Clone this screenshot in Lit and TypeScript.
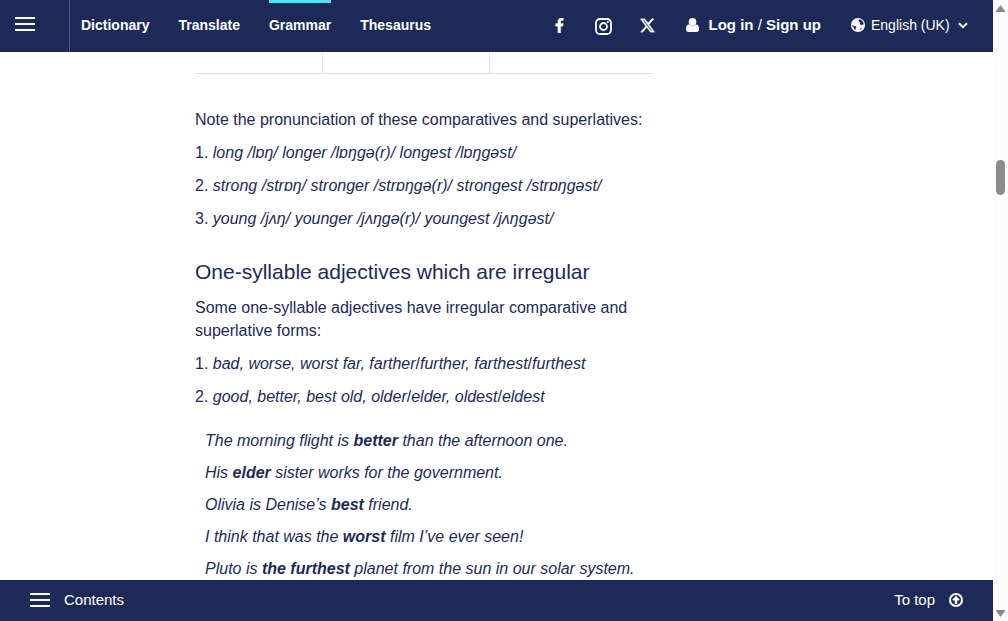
import { LitElement, html, css, svg } from "lit";
import { customElement } from "lit/decorators.js";

const menuIcon = html`<svg class="icon" width="20" height="14" viewBox="0 0 20 14" aria-hidden="true">
  <path fill="currentColor" d="M0 0h20v2H0zM0 6h20v2H0zM0 12h20v2H0z" />
</svg>`;

const social = [
  {
    label: "Facebook",
    width: 9,
    height: 15,
    box: "95 0 864 1664",
    shape: svg`<path fill="currentColor" stroke="currentColor" stroke-width="40" d="M959 12v264h-157q-86 0-116 36t-30 108v189h293l-39 296h-254v759h-306v-759h-255v-296h255v-218q0-186 104-288.5t277-102.5q147 0 228 12z"/>`,
  },
  {
    label: "Instagram",
    width: 17,
    height: 17,
    box: "0 0 17 17",
    shape: svg`<rect x="1" y="1" width="15" height="15" rx="4" fill="none" stroke="currentColor" stroke-width="1.8"/>
      <circle cx="8.5" cy="8.5" r="3.5" fill="none" stroke="currentColor" stroke-width="1.8"/>
      <circle cx="12.9" cy="4.1" r="1" fill="currentColor"/>`,
  },
  {
    label: "X",
    width: 15,
    height: 15,
    box: "1 1.5 22 21",
    shape: svg`<path fill="currentColor" stroke="currentColor" stroke-width="0.5" d="M18.244 2.25h3.308l-7.227 8.26 8.502 11.24H16.17l-5.214-6.817L4.99 21.75H1.68l7.73-8.835L1.254 2.25H8.08l4.713 6.231zm-1.161 17.52h1.833L7.084 4.126H5.117z"/>`,
  },
];

@customElement("site-header")
export class SiteHeader extends LitElement {
  static styles = css`
    :host {
      display: flex;
      align-items: stretch;
      box-sizing: border-box;
      height: 52px;
      background: #1d2a57;
      color: #fff;
      font-size: 14px;
      line-height: 20px;
    }
    .icon {
      display: block;
      flex: none;
    }
    .menu {
      width: 70px;
      padding: 0 0 4px 15px;
      border: 0;
      border-right: 1px solid #4a5579;
      background: none;
      color: inherit;
      cursor: pointer;
    }
    .nav {
      display: flex;
      gap: 29px;
      padding-left: 11px;
    }
    .nav-link {
      box-sizing: border-box;
      padding-top: 12px;
      border-top: 3px solid transparent;
      color: inherit;
      font-weight: bold;
      text-decoration: none;
    }
    .current {
      border-top-color: #4fe0fc;
    }
    .tools {
      display: flex;
      align-items: center;
      margin-left: auto;
      padding-right: 25px;
    }
    .social {
      display: flex;
      margin-right: 17px;
    }
    .social-link {
      display: flex;
      justify-content: center;
      width: 44px;
      color: inherit;
    }
    .account {
      display: flex;
      align-items: center;
      gap: 9px;
      margin-right: 30px;
      padding-bottom: 2px;
      font-size: 15px;
    }
    .account-link {
      color: inherit;
      font-weight: bold;
      text-decoration: none;
    }
    .language {
      display: grid;
      grid-template-columns: 14px auto 10px;
      align-items: center;
      padding-bottom: 2px;
    }
    .select {
      grid-area: 1 / 2 / 2 / 4;
      appearance: none;
      margin: 0;
      padding: 0 18px 0 6px;
      border: 0;
      background: none;
      color: inherit;
      font: inherit;
      cursor: pointer;
    }
    .chevron {
      grid-area: 1 / 3;
      pointer-events: none;
    }
  `;

  render() {
    return html`
      <button class="menu" aria-label="Menu">${menuIcon}</button>
      <nav class="nav">
        ${["Dictionary", "Translate", "Grammar", "Thesaurus"].map(
          (name) => html`<a class="nav-link ${name === "Grammar" ? "current" : ""}" href="#">${name}</a>`
        )}
      </nav>
      <div class="tools">
        <div class="social">
          ${social.map(
            (s) => html`<a class="social-link" href="#" aria-label=${s.label}>
              <svg class="icon" width=${s.width} height=${s.height} viewBox=${s.box}>${s.shape}</svg>
            </a>`
          )}
        </div>
        <div class="account">
          <svg class="icon" width="13" height="14" viewBox="0 0 13 14" aria-hidden="true">
            <ellipse cx="6.5" cy="4" rx="3.8" ry="4" fill="currentColor" />
            <path fill="currentColor" d="M3 6.600C.800 6.600 0 8.500 0 11.200 0 13 1 14 2.400 14h8.200c1.400 0 2.400-1 2.400-2.800 0-2.700-.8-4.600-3-4.600C7.900 8.900 5.100 8.900 3 6.600z" />
          </svg>
          <span><a class="account-link" href="#">Log in</a> / <a class="account-link" href="#">Sign up</a></span>
        </div>
        <label class="language">
          <svg class="icon" width="14" height="14" viewBox="0 0 14 14" aria-hidden="true">
            <circle cx="7" cy="7" r="7" fill="currentColor" />
            <path fill="#1d2a57" d="M7.800 1.400 9.400 1.600l1.900 1.200 1.200 2.100.2 1.700-1.200-.2-.7.9-1.300-.5-.8-1.300.5-1.200-1.100-.3.300-1-1.100-.3zM1.200 6.800l1.300.9 2 .5.900 1.100-.8 1.200-.3 1.600-1.200-.9-.4-1.600-1.200-1.200zM9.500 10.300l1.500-.5-.8 1.500-1.100.6z" />
          </svg>
          <select class="select" aria-label="Language">
            <option>English (UK)</option>
          </select>
          <svg class="icon chevron" width="10" height="7" viewBox="0 0 10 7" aria-hidden="true">
            <path d="M1 1.200 5 5.200 9 1.200" fill="none" stroke="currentColor" stroke-width="2" />
          </svg>
        </label>
      </div>
    `;
  }
}

@customElement("grammar-article")
export class GrammarArticle extends LitElement {
  static styles = css`
    :host {
      display: block;
      min-height: 0;
      overflow: hidden;
      padding-left: 195px;
      line-height: 23px;
    }
    .article {
      max-width: 458px;
    }
    .table {
      width: 100%;
      margin-bottom: 34px;
      border-collapse: collapse;
      table-layout: fixed;
    }
    .cell {
      height: 21px;
      padding: 0;
      border: 1px solid #dfe0e4;
      border-width: 0 1px 1px 0;
    }
    .cell:last-child {
      border-right: 0;
    }
    .narrow {
      width: 127px;
    }
    .medium {
      width: 166px;
    }
    .text {
      margin: 0 0 10px;
    }
    .forms {
      display: flex;
      flex-direction: column;
      gap: 10px;
      margin: 0;
      padding: 0;
      list-style: none;
    }
    .heading {
      margin: 28px 0 10px;
      font-size: 21px;
      font-weight: normal;
      line-height: 28px;
    }
    .examples {
      display: flex;
      flex-direction: column;
      gap: 9px;
      margin: 21px 0 0;
      padding: 0 0 0 10px;
      list-style: none;
      font-style: italic;
    }
  `;

  render() {
    return html`
      <article class="article">
        <table class="table">
          <tr>
            <td class="cell narrow"></td>
            <td class="cell medium"></td>
            <td class="cell"></td>
          </tr>
        </table>
        <p class="text">Note the pronunciation of these comparatives and superlatives:</p>
        <ol class="forms">
          <li>1. <em>long /lɒŋ/ longer /lɒŋgə(r)/ longest /lɒŋgəst/</em></li>
          <li>2. <em>strong /strɒŋ/ stronger /strɒŋgə(r)/ strongest /strɒŋgəst/</em></li>
          <li>3. <em>young /jʌŋ/ younger /jʌŋgə(r)/ youngest /jʌŋgəst/</em></li>
        </ol>
        <h2 class="heading">One-syllable adjectives which are irregular</h2>
        <p class="text">Some one-syllable adjectives have irregular comparative and superlative forms:</p>
        <ol class="forms">
          <li>1. <em>bad, worse, worst far, farther</em>/<em>further, farthest</em>/<em>furthest</em></li>
          <li>2. <em>good, better, best old, older</em>/<em>elder, oldest</em>/<em>eldest</em></li>
        </ol>
        <ul class="examples">
          <li>The morning flight is <b>better</b> than the afternoon one.</li>
          <li>His <b>elder</b> sister works for the government.</li>
          <li>Olivia is Denise’s <b>best</b> friend.</li>
          <li>I think that was the <b>worst</b> film I’ve ever seen!</li>
          <li>Pluto is <b>the furthest</b> planet from the sun in our solar system.</li>
        </ul>
      </article>
    `;
  }
}

@customElement("page-scrollbar")
export class PageScrollbar extends LitElement {
  static styles = css`
    :host {
      display: flex;
      flex-direction: column;
      align-items: center;
      box-sizing: border-box;
      padding: 5px 0 4px;
      background: #fcfcfc;
      color: #8b8b8b;
    }
    .arrow {
      display: block;
      flex: none;
    }
    .track {
      display: grid;
      flex: 1;
      grid-template-rows: 148fr 35fr 414fr;
    }
    .thumb {
      grid-row: 2;
      width: 9px;
      border-radius: 5px;
      background: currentColor;
    }
  `;

  render() {
    return html`
      <svg class="arrow" width="9" height="7" viewBox="0 0 9 7"><path fill="currentColor" d="M4.500 0 9 6v1H0V6z" /></svg>
      <div class="track"><div class="thumb"></div></div>
      <svg class="arrow" width="9" height="7" viewBox="0 0 9 7"><path fill="currentColor" d="M0 0h9v1L4.500 7 0 1z" /></svg>
    `;
  }
}

@customElement("app-root")
export class AppRoot extends LitElement {
  static styles = css`
    :host {
      display: grid;
      grid-template-columns: minmax(0, 1fr) 15px;
      height: 100vh;
      background: #fff;
      color: #1d2a57;
      font-family: "Liberation Sans", Arial, sans-serif;
      font-size: 16px;
    }
    .page {
      display: grid;
      grid-template-rows: auto minmax(0, 1fr) auto;
      min-height: 0;
    }
    .footer {
      display: flex;
      justify-content: space-between;
      align-items: center;
      box-sizing: border-box;
      height: 41px;
      padding: 0 30px 2px;
      background: #1d2a57;
      color: #fff;
    }
    .action {
      display: flex;
      align-items: center;
      gap: 14px;
      padding: 0;
      border: 0;
      background: none;
      color: inherit;
      font-family: inherit;
      font-size: 15px;
      line-height: 20px;
      text-decoration: none;
      cursor: pointer;
    }
    .icon {
      display: block;
      flex: none;
    }
  `;

  render() {
    return html`
      <div class="page">
        <site-header></site-header>
        <grammar-article></grammar-article>
        <footer class="footer">
          <button class="action">${menuIcon} Contents</button>
          <a class="action" href="#">
            To top
            <svg class="icon" width="14" height="14" viewBox="0 0 14 14" aria-hidden="true">
              <circle cx="7" cy="7" r="6" fill="none" stroke="currentColor" stroke-width="2" />
              <path fill="currentColor" d="M7 2.800 10.700 6.700 9.900 7.500H8.200V11H5.800V7.500H4.100L3.300 6.700z" />
            </svg>
          </a>
        </footer>
      </div>
      <page-scrollbar></page-scrollbar>
    `;
  }
}
